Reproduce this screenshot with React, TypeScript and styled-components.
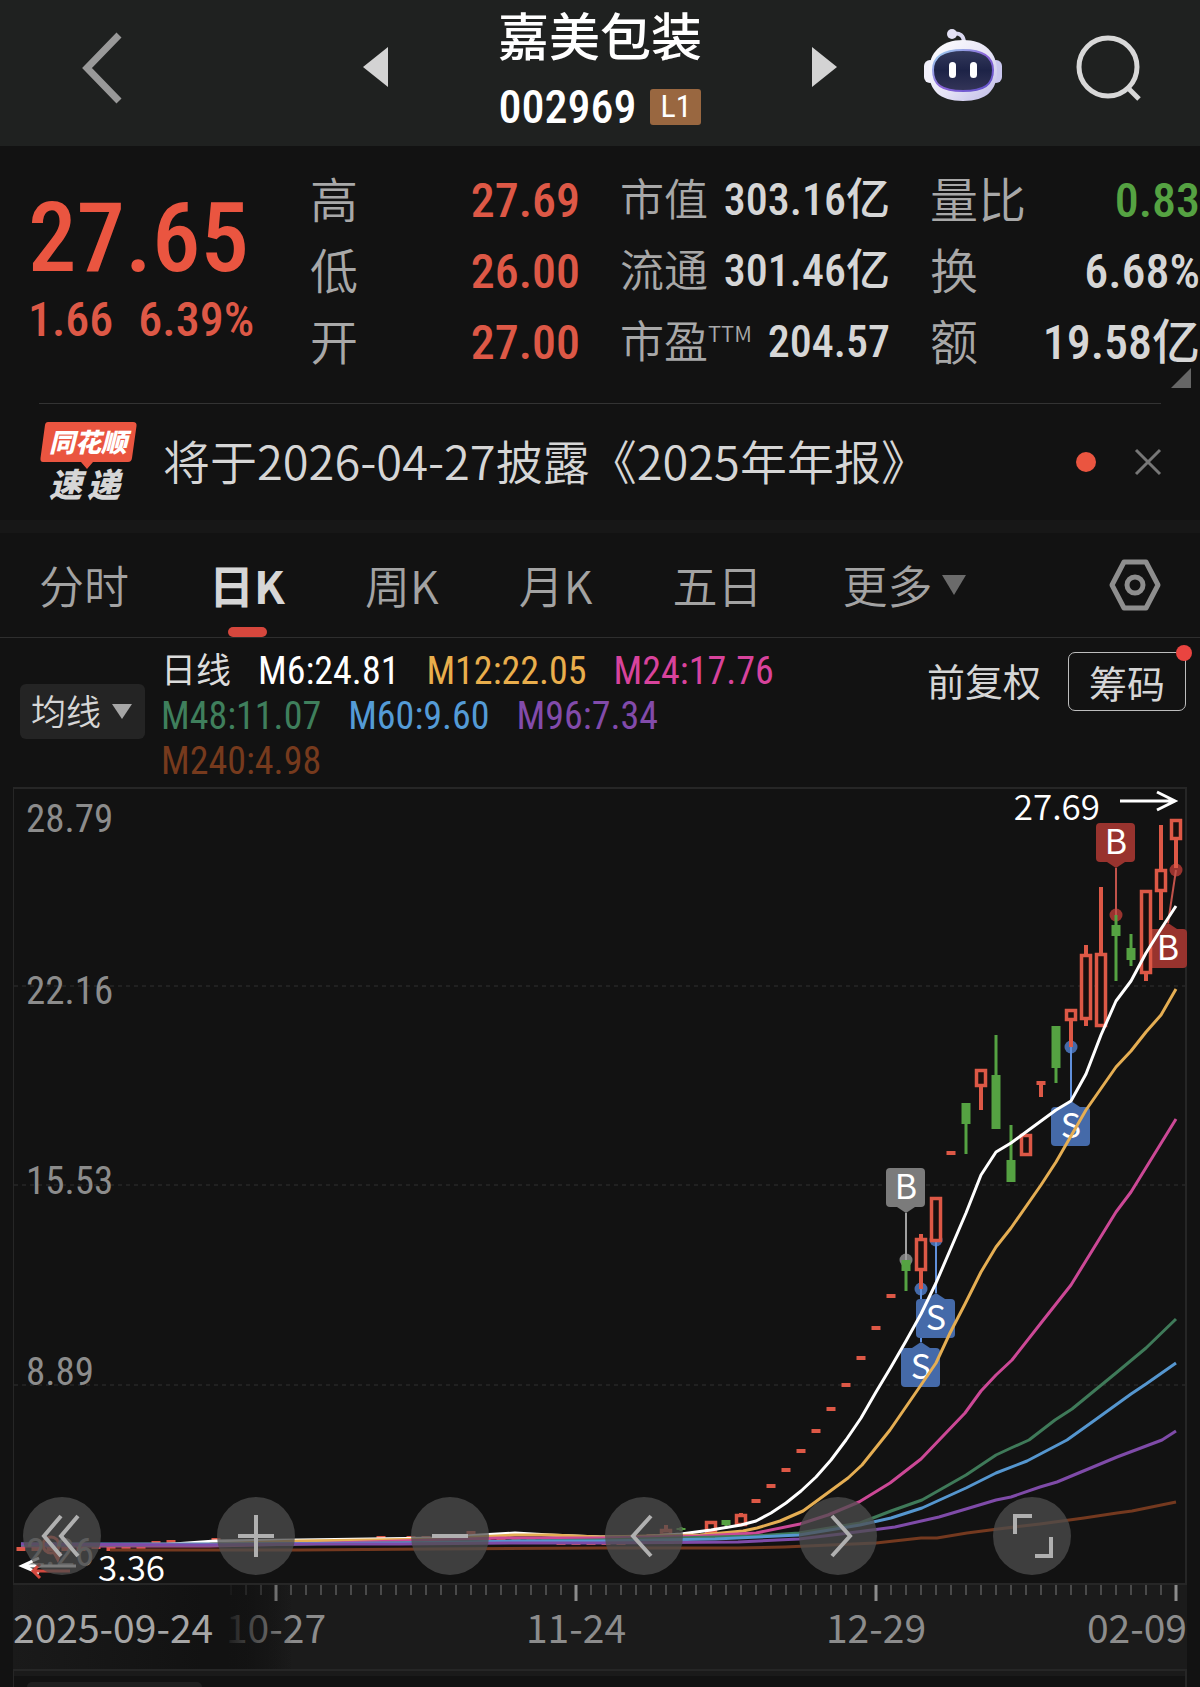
import React from 'react';
import styled, { createGlobalStyle } from 'styled-components';

const SANS = '"Noto Sans CJK SC", "Noto Sans", sans-serif';
const NUM = '"Roboto Condensed", "Noto Sans CJK SC", sans-serif';

const c = {
  page: '#121212',
  header: '#1f2120',
  band: '#171717',
  axis: '#1b1b1b',
  line: '#2e2e2e',
  frame: '#262626',
  up: '#dd5846',
  price: '#ea5540',
  down: '#55a242',
  text: '#d6d6d6',
  muted: '#a3a3a3',
};

const GlobalStyle = createGlobalStyle`
  * { box-sizing: border-box; }
  body { margin: 0; background: ${c.page}; color: ${c.text}; font-family: ${SANS}; }
  button, select { font: inherit; color: inherit; background: none; border: 0; margin: 0; padding: 0; cursor: pointer; }
  svg { display: block; overflow: visible; }
  h1, p, dl, dd, dt { margin: 0; font-weight: inherit; }
`;

const Page = styled.main`
  min-height: 100vh;
  display: flex;
  flex-direction: column;
`;

/* ---------- header ---------- */
const Header = styled.header`
  display: grid;
  grid-template-columns: 1fr auto 1fr;
  flex: none;
  height: 146px;
  background: ${c.header};
`;
const HeaderStart = styled.div`
  display: flex;
  align-items: center;
  padding: 0 0 10px 80px;
`;
const HeaderEnd = styled.div`
  display: flex;
  align-items: center;
  justify-content: flex-end;
  gap: 71px;
  padding: 0 56px 12px 0;
`;
const Switcher = styled.div`
  display: flex;
  justify-content: space-between;
  width: 474px;
`;
const StepButton = styled.button`
  align-self: center;
  padding-bottom: 12px;
`;
const Titles = styled.div`
  display: flex;
  flex-direction: column;
  align-items: center;
  gap: 9px;
`;
const Name = styled.h1`
  font-size: 51px;
  line-height: 68px;
  font-weight: 500;
  color: #fff;
`;
const CodeRow = styled.p`
  display: flex;
  align-items: center;
  gap: 14px;
  font: 500 46px/60px ${NUM};
  color: #fff;
`;
const Level = styled.span`
  width: 51px;
  height: 36px;
  border-radius: 3px;
  background: #996740;
  font: 400 32px/34px ${NUM};
  text-align: center;
`;

/* ---------- quote ---------- */
const Quote = styled.section`
  display: grid;
  grid-template-columns: 270px repeat(3, 1fr);
  column-gap: 40px;
  flex: none;
  height: 257px;
  padding: 16px 0 0 0;
  position: relative;
`;
const PriceBlock = styled.div`
  padding: 28px 0 0 28px;
  color: ${c.price};
  white-space: nowrap;
`;
const Price = styled.p`
  font: 500 97px/96px ${NUM};
`;
const Change = styled.p`
  display: flex;
  gap: 25px;
  margin-top: 9px;
  font: 500 48px/50px ${NUM};
  color: ${c.up};
`;
const Stats = styled.dl`
  display: flex;
  flex-direction: column;
`;
const Stat = styled.div`
  display: flex;
  justify-content: space-between;
  height: 71px;
  white-space: nowrap;
  line-height: 71px;
`;
const StatLabel = styled.dt<{ $size: number }>`
  font-size: ${(p) => p.$size}px;
  font-weight: 350;
  color: #a8a8a8;
`;
const Ttm = styled.sup`
  font-size: 22px;
  line-height: 22px;
  vertical-align: 16px;
`;
const StatValue = styled.dd<{ $size: number; $color: string }>`
  padding-top: 3px;
  font-family: ${NUM};
  font-size: ${(p) => p.$size}px;
  font-weight: 500;
  color: ${(p) => p.$color};
`;
const Expand = styled.button`
  position: absolute;
  right: 9px;
  bottom: 15px;
`;

/* ---------- notice ---------- */
const Notice = styled.section`
  display: flex;
  align-items: center;
  flex: none;
  height: 117px;
  margin: 0 39px;
  border-top: 1px solid #333;
`;
const NoticeLink = styled.a`
  margin: 0 auto 4px 26px;
  font-size: 47px;
  line-height: 60px;
  font-weight: 350;
  color: ${c.text};
  text-decoration: none;
  white-space: nowrap;
`;
const Dot = styled.span<{ $size: number }>`
  width: ${(p) => p.$size}px;
  height: ${(p) => p.$size}px;
  border-radius: 50%;
  background: ${c.price};
`;
const CloseButton = styled.button`
  margin-left: 39px;
`;

/* ---------- tabs ---------- */
const Tabs = styled.nav`
  display: flex;
  flex: none;
  align-items: stretch;
  gap: 80px;
  height: 118px;
  padding: 0 39px;
  border-top: 13px solid ${c.band};
  border-bottom: 1px solid ${c.line};
`;
const Tab = styled.button<{ $active?: boolean }>`
  position: relative;
  display: flex;
  align-items: center;
  gap: 10px;
  font-size: 45px;
  line-height: 60px;
  font-weight: ${(p) => (p.$active ? 700 : 350)};
  color: ${(p) => (p.$active ? c.text : c.muted)};
  white-space: nowrap;
  &::after {
    content: '';
    display: ${(p) => (p.$active ? 'block' : 'none')};
    position: absolute;
    left: 50%;
    bottom: 0;
    width: 39px;
    height: 10px;
    margin-left: -19px;
    border-radius: 5px;
    background: #d6473d;
  }
`;
const SettingsButton = styled.button`
  margin-left: auto;
`;

/* ---------- moving averages ---------- */
const Averages = styled.section`
  display: flex;
  flex: none;
  align-items: flex-start;
  height: 149px;
  padding: 11px 14px 0 20px;
`;
const Picker = styled.label`
  position: relative;
  flex: none;
  margin-top: 35px;
  svg { position: absolute; right: 13px; top: 20px; pointer-events: none; }
`;
const PickerSelect = styled.select`
  appearance: none;
  width: 125px;
  height: 55px;
  padding: 0 0 3px 11px;
  border-radius: 6px;
  background: #242424;
  font-size: 35px;
  line-height: 52px;
  font-weight: 350;
`;
const Legend = styled.ul`
  display: flex;
  flex-wrap: wrap;
  column-gap: 27px;
  flex: 0 1 660px;
  margin: 0;
  padding: 0 0 0 16px;
  list-style: none;
`;
const LegendItem = styled.li<{ $color: string; $size: number }>`
  font: 400 ${(p) => p.$size}px/45px ${NUM};
  color: ${(p) => p.$color};
`;
const Adjust = styled.button`
  margin: 4px 27px 0 auto;
  font-size: 38px;
  line-height: 54px;
`;
const ChipsButton = styled.button`
  position: relative;
  margin-top: 3px;
  width: 118px;
  height: 59px;
  border: 1px solid #bdbdbd;
  border-radius: 7px;
  font-size: 38px;
  line-height: 54px;
  span { position: absolute; right: -7px; top: -8px; background: #ea4440; }
`;

/* ---------- chart ---------- */
const ChartArea = styled.section`
  position: relative;
  flex: none;
  margin: 0 13px;
  border: 2px solid ${c.frame};
  border-left-width: 1px;
  height: 798px;
`;
const Plot = styled.svg`
  width: 100%;
  height: 100%;
`;
const Scale = styled.ol`
  position: absolute;
  inset: 5px auto 0 12px;
  display: flex;
  flex-direction: column;
  margin: 0;
  padding: 0;
  list-style: none;
  font: 400 39px/50px ${NUM};
  color: #8c8c8c;
`;
const ScaleMark = styled.li<{ $height: number }>`
  height: ${(p) => p.$height}px;
`;
const HighMark = styled.p`
  position: absolute;
  right: 7px;
  top: 0;
  display: flex;
  align-items: flex-start;
  gap: 20px;
  font-size: 35px;
  line-height: 32px;
  font-weight: 350;
  color: #fff;
  svg { margin-top: 1px; }
`;
const LowMark = styled.p`
  position: absolute;
  left: 6px;
  bottom: 0;
  display: flex;
  align-items: center;
  gap: 20px;
  font-size: 35px;
  line-height: 34px;
  font-weight: 350;
  color: #fff;
`;
const Controls = styled.div`
  position: absolute;
  left: 9px;
  right: 0;
  bottom: 8px;
  display: flex;
  gap: 116px;
`;
const Control = styled.button`
  display: grid;
  place-items: center;
  width: 78px;
  height: 78px;
  border-radius: 50%;
  background: rgba(78, 78, 78, 0.75);
`;

/* ---------- date axis ---------- */
const Axis = styled.section`
  position: relative;
  flex: none;
  margin: 0 13px;
  height: 84px;
  background: linear-gradient(90deg, #1a1a1a 0, ${c.page} 190px, ${c.page} 215px, ${c.axis} 280px);
  &::after {
    content: '';
    position: absolute;
    inset: 0 auto 0 190px;
    width: 90px;
    background: linear-gradient(90deg, ${c.page} 20%, transparent);
  }
`;
const Ticks = styled.svg`
  width: 100%;
  height: 16px;
`;
const Dates = styled.div`
  display: grid;
  grid-template-columns:
    minmax(0, 113fr) repeat(3, minmax(0, 300fr)) minmax(0, 161fr);
  padding-top: 1px;
  font-size: 39px;
  line-height: 48px;
  color: #8c8c8c;
  text-align: center;
  white-space: nowrap;
`;
const DateMark = styled.time<{ $edge?: 'start' | 'end' }>`
  text-align: ${(p) => p.$edge ?? 'center'};
  ${(p) => p.$edge === 'start' && 'color: #a6a6a6; position: relative; z-index: 1;'}
`;
const NextPane = styled.section`
  flex: 1;
  margin: 0 13px;
  border: solid ${c.frame};
  border-width: 2px 2px 0 1px;
  background: linear-gradient(#1a1a1a 5px, ${c.page} 5px);
  padding: 11px 13px 0;
`;
const PaneTab = styled.div`
  width: 175px;
  height: 5px;
  border-radius: 6px 6px 0 0;
  background: #1f1f1f;
`;

/* ---------- data ---------- */
type Candle = { up: boolean; high: number; top: number; bottom: number; low: number; flat?: boolean };
const k = (up: boolean, high: number, top: number, bottom: number, low: number): Candle => ({ up, high, top, bottom, low });
const flat = (y: number): Candle => ({ up: true, high: y, top: y, bottom: y, low: y, flat: true });

/* newest first, one every 15 units going left */
const candles: Candle[] = [
  k(true, 819, 819, 840, 868), k(true, 825, 869, 892, 920), k(true, 890, 890, 974, 981),
  k(false, 934, 948, 960, 966), k(false, 915, 925, 936, 981), k(true, 887, 953, 1027, 1027),
  k(true, 945, 954, 1020, 1026), k(true, 1009, 1009, 1021, 1047), k(false, 1026, 1026, 1068, 1083),
  k(true, 1081, 1081, 1085, 1097), k(true, 1134, 1134, 1156, 1156), k(false, 1125, 1160, 1182, 1182),
  k(false, 1035, 1075, 1129, 1129), k(true, 1069, 1069, 1087, 1110), k(false, 1103, 1103, 1124, 1154),
  flat(1153), k(true, 1197, 1197, 1242, 1242), k(true, 1234, 1238, 1271, 1289),
  k(false, 1260, 1260, 1271, 1291), flat(1296), flat(1328), flat(1358), flat(1385), flat(1409),
  flat(1431), flat(1451), flat(1470), flat(1486), flat(1501), k(true, 1513, 1514, 1526, 1526),
  k(false, 1520, 1520, 1525, 1529), k(true, 1521, 1521, 1534, 1534), k(false, 1531, 1531, 1533, 1533),
  k(false, 1527, 1528, 1530, 1531), k(true, 1525, 1529, 1536, 1536), flat(1536), flat(1538),
  flat(1543), flat(1543), flat(1543), flat(1543), flat(1543), flat(1541), flat(1540), flat(1540),
  flat(1540), flat(1540), flat(1533), flat(1536), flat(1537), flat(1538), flat(1538), flat(1541),
  flat(1538), flat(1541), flat(1541), flat(1542), flat(1542), flat(1542), flat(1542), flat(1542),
  flat(1542), flat(1542), flat(1542), flat(1540), flat(1545), flat(1545), flat(1542), flat(1543),
  flat(1548), flat(1549), flat(1549), flat(1547), flat(1549), flat(1549), flat(1549), flat(1549), flat(1549),
];

/* shortest period first, so that the long averages lie on top where they bunch up */
const averages: { color: string; points: string }[] = [
  { color: '#ffffff', points: '21,1545 160,1545 215,1541 300,1540 440,1538 480,1535 515,1533 550,1535 600,1537 640,1537 681,1534 711,1530 741,1525 756,1521 771,1513 786,1503 801,1491 816,1477 831,1460 846,1440 861,1418 876,1392 891,1367 906,1341 921,1314 936,1283 951,1248 966,1213 981,1175 996,1152 1011,1143 1026,1132 1041,1121 1056,1110 1071,1101 1086,1074 1101,1035 1116,1001 1131,981 1146,953 1161,929 1176,906' },
  { color: '#e5ae53', points: '21,1545 210,1544 300,1541 440,1539 515,1535 550,1535 600,1537 700,1535 743,1531 757,1528 780,1521 803,1511 848,1478 862,1465 890,1430 921,1385 936,1363 950,1333 965,1304 981,1272 996,1247 1011,1228 1041,1185 1056,1162 1086,1110 1116,1067 1131,1051 1146,1032 1161,1015 1176,989' },
  { color: '#cc4896', points: '21,1546 210,1546 300,1544 400,1541 500,1538 600,1538 700,1536 756,1533 800,1524 828,1515 859,1502 890,1483 921,1459 965,1413 981,1391 996,1375 1012,1360 1041,1323 1071,1285 1116,1212 1131,1192 1176,1119' },
  { color: '#3f7a59', points: '21,1545 210,1545 400,1543 520,1541 600,1540 753,1536 799,1533 860,1523 891,1511 922,1500 966,1475 996,1455 1011,1448 1029,1440 1055,1420 1072,1409 1116,1373 1146,1348 1176,1319' },
  { color: '#5596cf', points: '21,1544 210,1544 400,1543 520,1541 600,1541 715,1539 799,1535 860,1525 891,1518 922,1508 966,1488 996,1473 1027,1461 1067,1440 1095,1420 1131,1394 1146,1384 1176,1363' },
  { color: '#7f4ba8', points: '21,1544 200,1545 300,1544 400,1544 520,1543 600,1543 738,1542 799,1539 841,1534 895,1527 939,1517 966,1509 996,1500 1011,1497 1040,1487 1057,1482 1117,1457 1162,1440 1176,1431' },
  { color: '#74391f', points: '110,1550 300,1550 430,1549 600,1548 738,1548 784,1547 876,1543 921,1538 937,1538 967,1533 998,1529 1040,1524 1084,1518 1117,1513 1132,1511 1176,1502' },
];

const tones = {
  red: ['#98332e', '#c0524a'],
  blue: ['#456aa9', '#6090dc'],
  grey: ['#7b7b7b', '#a0a0a0'],
};
type Tag = { letter: string; tone: keyof typeof tones; x: number; y: number; dotX: number; dotY: number; tipX: number; below: boolean };
const tags: Tag[] = [
  { letter: 'B', tone: 'red', x: 1096, y: 823, dotX: 1116, dotY: 915, tipX: 1116, below: false },
  { letter: 'B', tone: 'red', x: 1148, y: 929, dotX: 1176, dotY: 870, tipX: 1168, below: true },
  { letter: 'S', tone: 'blue', x: 1051, y: 1107, dotX: 1071, dotY: 1047, tipX: 1071, below: true },
  { letter: 'B', tone: 'grey', x: 886, y: 1168, dotX: 906, dotY: 1260, tipX: 906, below: false },
  { letter: 'S', tone: 'blue', x: 916, y: 1299, dotX: 936, dotY: 1240, tipX: 936, below: true },
  { letter: 'S', tone: 'blue', x: 901, y: 1348, dotX: 921, dotY: 1289, tipX: 921, below: true },
];

const legend = [
  ['日线', '#dcdcdc'], ['M6:24.81', '#ffffff'], ['M12:22.05', '#e9ae4c'], ['M24:17.76', '#d8439c'],
  ['M48:11.07', '#3f7f5c'], ['M60:9.60', '#549bd6'], ['M96:7.34', '#824bab'], ['M240:4.98', '#763a1d'],
];

/* ---------- chart pieces ---------- */
function CandleMark({ x, d }: { x: number; d: Candle }) {
  const color = d.up ? c.up : c.down;
  if (d.flat) return <rect x={x - 4.5} y={d.top - 2} width="9" height="4" fill={color} />;
  const solid = !d.up || d.bottom - d.top < 6;
  return (
    <g>
      <path d={`M${x} ${d.high}V${d.top}M${x} ${d.bottom}V${d.low}`} stroke={color} strokeWidth={d.up ? 4 : 3} />
      {solid ? (
        <rect x={x - 4.5} y={d.top} width="9" height={d.bottom - d.top} fill={color} />
      ) : (
        <rect x={x - 4.5} y={d.top + 1.5} width="9" height={d.bottom - d.top - 3} fill="#1a0f0e" stroke={color} strokeWidth="3.5" />
      )}
    </g>
  );
}

function TagLine({ t }: { t: Tag }) {
  const [fill, line] = tones[t.tone];
  const edge = t.below ? t.y : t.y + 39;
  const tip = t.below ? t.y - 6 : t.y + 45;
  return (
    <g>
      <circle cx={t.dotX} cy={t.dotY} r="6.5" fill={fill} />
      <path d={`M${t.dotX} ${t.dotY}L${t.tipX} ${tip}`} stroke={line} strokeWidth="2" />
      <path d={`M${t.tipX - 9} ${edge}L${t.tipX} ${tip}L${t.tipX + 9} ${edge}Z`} fill={fill} />
    </g>
  );
}

function TagBox({ t }: { t: Tag }) {
  return (
    <g>
      <rect x={t.x} y={t.y} width="39" height="39" rx="4" fill={tones[t.tone][0]} />
      <text x={t.x + 20} y={t.y + 31} fontSize="34" fill="#fff" textAnchor="middle" fontFamily={SANS}>{t.letter}</text>
    </g>
  );
}

function Robot() {
  return (
    <svg width="80" height="76" viewBox="0 0 80 76" aria-hidden="true">
      <defs>
        <linearGradient id="shell" x1="0" y1="0" x2="1" y2="1">
          <stop offset="0" stopColor="#ffffff" /><stop offset=".55" stopColor="#e6e4f6" /><stop offset="1" stopColor="#bdb9e6" />
        </linearGradient>
        <linearGradient id="rim" x1="0" y1="0" x2="1" y2="1">
          <stop offset="0" stopColor="#9fdcf2" /><stop offset=".5" stopColor="#8a63d8" /><stop offset="1" stopColor="#5b50c8" />
        </linearGradient>
        <linearGradient id="visor" x1="0" y1="0" x2="0" y2="1">
          <stop offset="0" stopColor="#343a5c" /><stop offset=".5" stopColor="#1d2347" /><stop offset="1" stopColor="#343558" />
        </linearGradient>
      </defs>
      <path d="M29 5C37 3 41 7 41 14" fill="none" stroke="#d9d7f0" strokeWidth="4" />
      <circle cx="29" cy="5" r="5" fill="#e3e1f5" />
      <rect x="1" y="31" width="12" height="23" rx="6" fill="#f1f0fb" />
      <rect x="67" y="31" width="12" height="23" rx="6" fill="#c9c6ee" />
      <path d="M40 11C62 11 74 24 74 42C74 61 64 72 40 72C16 72 6 61 6 42C6 24 18 11 40 11Z" fill="url(#shell)" />
      <path d="M40 21C60 21 70 28 70 41C70 56 61 62 40 62C19 62 10 56 10 41C10 28 20 21 40 21Z" fill="url(#visor)" stroke="url(#rim)" strokeWidth="2" />
      <rect x="26" y="33" width="7" height="16" rx="3.5" fill="#fff" />
      <rect x="47" y="33" width="7" height="16" rx="3.5" fill="#fff" />
    </svg>
  );
}

function ExpressLogo() {
  return (
    <svg width="98" height="82" viewBox="0 0 98 82" role="img" aria-label="同花顺速递" fontFamily={SANS} fontStyle="italic" fontWeight="900">
      <path d="M9 1H94Q98 1 97.500 5L93 37Q92.500 41 89 41H54L48 48L42 41H4Q1 41 1.500 37L6 4Q6.500 1 9 1Z" fill={c.price} />
      <text x="10" y="31" fontSize="26" fill="#fff">同花顺</text>
      <text x="10" y="76" fontSize="33" fill={c.text}>速</text>
      <text x="48" y="76" fontSize="33" fill={c.text}>递</text>
    </svg>
  );
}

function Triangle({ points, w, h, color }: { points: string; w: number; h: number; color: string }) {
  return <svg width={w} height={h} aria-hidden="true"><polygon points={points} fill={color} /></svg>;
}

const controlIcons: [string, string][] = [
  ['最早', 'M19 1L2 21L19 41M36 1L19 21L36 41'],
  ['放大', 'M20 0V42M2 21H38'],
  ['缩小', 'M2 21H38'],
  ['左移', 'M27 1L9 21L27 41'],
  ['右移', 'M14 1L32 21L14 41'],
  ['全屏', 'M3 19V1H20M23 41H39V22'],
];

const statColumns = [
  [['高', '27.69', c.up], ['低', '26.00', c.up], ['开', '27.00', c.up]],
  [['市值', '303.16亿', c.text], ['流通', '301.46亿', c.text], ['市盈', '204.57', c.text]],
  [['量比', '0.83', c.down], ['换', '6.68%', c.text], ['额', '19.58亿', c.text]],
];

export default function App() {
  return (
    <Page>
      <GlobalStyle />
      <Header>
        <HeaderStart>
          <button aria-label="返回">
            <svg width="46" height="72" fill="none" stroke="#999" strokeWidth="7"><path d="M39 3L7 36L39 69" /></svg>
          </button>
        </HeaderStart>
        <Switcher>
          <StepButton aria-label="上一只"><Triangle w={25} h={40} points="25,0 25,40 0,20" color="#d3d3d3" /></StepButton>
          <Titles>
            <Name>嘉美包装</Name>
            <CodeRow>002969<Level>L1</Level></CodeRow>
          </Titles>
          <StepButton aria-label="下一只"><Triangle w={25} h={40} points="0,0 0,40 25,20" color="#d3d3d3" /></StepButton>
        </Switcher>
        <HeaderEnd>
          <button aria-label="智能助手"><Robot /></button>
          <button aria-label="搜索">
            <svg width="70" height="70" fill="none" stroke="#d8d8d8" strokeWidth="5"><circle cx="34" cy="35" r="29" /><path d="M54 56L65 67" /></svg>
          </button>
        </HeaderEnd>
      </Header>

      <Quote>
        <PriceBlock>
          <Price>27.65</Price>
          <Change><span>1.66</span><span>6.39%</span></Change>
        </PriceBlock>
        {statColumns.map((rows, i) => (
          <Stats key={i}>
            {rows.map(([label, value, color]) => (
              <Stat key={label}>
                <StatLabel $size={i === 1 ? 44 : 48}>{label}{label === '市盈' && <Ttm>TTM</Ttm>}</StatLabel>
                <StatValue $size={i === 1 ? 44 : 48} $color={color}>{value}</StatValue>
              </Stat>
            ))}
          </Stats>
        ))}
        <Expand aria-label="展开"><Triangle w={20} h={20} points="20,0 20,20 0,20" color="#666" /></Expand>
      </Quote>

      <Notice>
        <ExpressLogo />
        <NoticeLink href="#notice">将于2026-04-27披露《2025年年报》</NoticeLink>
        <Dot $size={20} />
        <CloseButton aria-label="关闭">
          <svg width="26" height="28" stroke="#777" strokeWidth="3"><path d="M1 2L25 26M25 2L1 26" /></svg>
        </CloseButton>
      </Notice>

      <Tabs>
        <Tab>分时</Tab>
        <Tab $active>日K</Tab>
        <Tab>周K</Tab>
        <Tab>月K</Tab>
        <Tab>五日</Tab>
        <Tab aria-haspopup="menu">更多<Triangle w={24} h={20} points="0,0 24,0 12,20" color="#6b6b6b" /></Tab>
        <SettingsButton aria-label="设置">
          <svg width="52" height="52" fill="none" stroke="#8e8e8e" strokeWidth="5" strokeLinejoin="round">
            <path d="M15 3H37L49 26L37 49H15L3 26Z" /><circle cx="26" cy="26" r="8" />
          </svg>
        </SettingsButton>
      </Tabs>

      <Averages>
        <Picker>
          <PickerSelect aria-label="指标" defaultValue="ma"><option value="ma">均线</option></PickerSelect>
          <Triangle w={20} h={15} points="0,0 20,0 10,15" color="#a6a6a6" />
        </Picker>
        <Legend>
          {legend.map(([label, color], i) => <LegendItem key={label} $color={color} $size={i === 0 ? 35 : 38}>{label}</LegendItem>)}
        </Legend>
        <Adjust>前复权</Adjust>
        <ChipsButton>筹码<Dot $size={16} /></ChipsButton>
      </Averages>

      <ChartArea>
        <Plot viewBox="14 789 1171 794" preserveAspectRatio="none">
          <path d="M14 986H1185M14 1185H1185M14 1385H1185" stroke="#303030" strokeWidth="1" strokeDasharray="4 4" />
          {tags.map((t) => <TagLine key={t.x} t={t} />)}
          {tags.map((t) => <TagBox key={t.x} t={t} />)}
          {candles.map((d, i) => <CandleMark key={i} x={1176 - i * 15} d={d} />)}
          {averages.map((a) => (
            <polyline key={a.color} points={a.points} fill="none" stroke={a.color} strokeWidth="3" strokeLinejoin="round" />
          ))}
          <circle cx="51" cy="1545" r="8" fill="none" stroke={c.up} strokeWidth="3" />
          <path d="M52 1552L58 1563L62 1552Z" fill={c.up} />
        </Plot>
        <Scale>
          <ScaleMark $height={172}>28.79</ScaleMark>
          <ScaleMark $height={190}>22.16</ScaleMark>
          <ScaleMark $height={191}>15.53</ScaleMark>
          <ScaleMark $height={181}>8.89</ScaleMark>
          <ScaleMark $height={50}>2.26</ScaleMark>
        </Scale>
        <HighMark>
          27.69
          <svg width="58" height="22" fill="none" stroke="#fff" strokeWidth="3"><path d="M0 11H55M37 2L55 11L37 20" /></svg>
        </HighMark>
        <LowMark>
          <svg width="58" height="24" fill="none" strokeWidth="3">
            <path d="M2 12H56M19 4L2 12L19 19" stroke="#fff" /><path d="M13 17H50M20 10L13 17L20 24" stroke="#d4483e" />
          </svg>
          3.36
        </LowMark>
        <Controls>
          {controlIcons.map(([label, d]) => (
            <Control key={label} aria-label={label}>
              <svg width="40" height="42" fill="none" stroke="#b0b0b0" strokeWidth="4"><path d={d} /></svg>
            </Control>
          ))}
        </Controls>
      </ChartArea>

      <Axis>
        <Ticks viewBox="13 0 1174 16" preserveAspectRatio="none">
          {Array.from({ length: 64 }, (_, i) => {
            const major = (i - 3) % 20 === 0;
            return <path key={i} d={`M${231 + i * 15} 0V${major ? 16 : 10}`} stroke={major ? '#8c8c8c' : '#4a4a4a'} strokeWidth={major ? 3 : 2} />;
          })}
        </Ticks>
        <Dates>
          <DateMark $edge="start">2025-09-24</DateMark>
          <DateMark>10-27</DateMark>
          <DateMark>11-24</DateMark>
          <DateMark>12-29</DateMark>
          <DateMark $edge="end">02-09</DateMark>
        </Dates>
      </Axis>
      <NextPane><PaneTab /></NextPane>
    </Page>
  );
}
